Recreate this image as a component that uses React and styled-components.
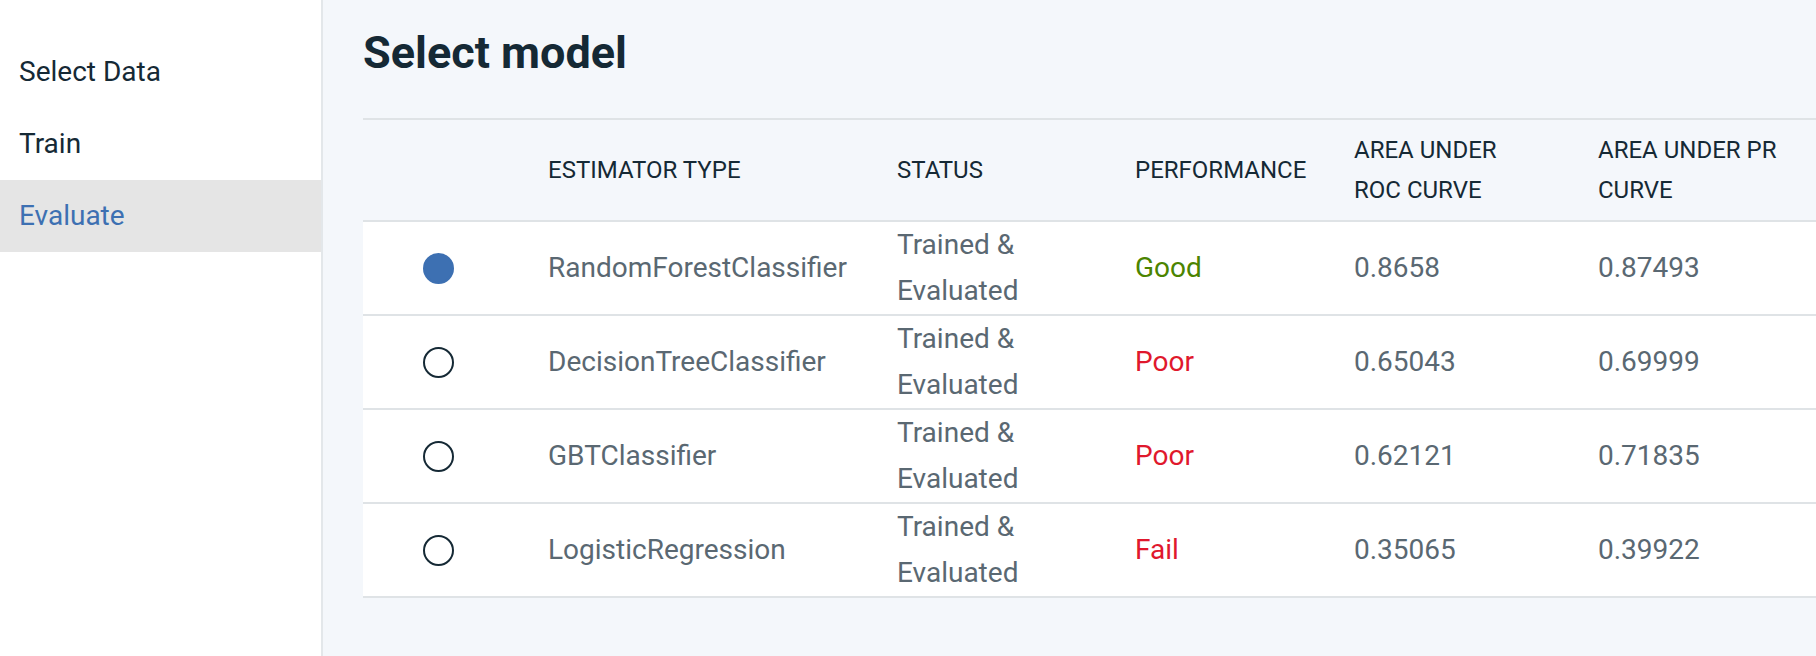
import React from "react";
import styled, { createGlobalStyle } from "styled-components";

const GlobalStyle = createGlobalStyle`
  html, body { margin: 0; padding: 0; }
  body {
    font-family: Roboto, "Liberation Sans", sans-serif;
    background: #f4f7fb;
    color: #152935;
  }
  * { box-sizing: border-box; }
`;

const Page = styled.div`
  display: grid;
  grid-template-columns: 323px 1fr;
  min-height: 656px;
`;

const Sidebar = styled.nav`
  background: #ffffff;
  border-right: 2px solid #e3e7ea;
  padding-top: 36px;
  display: flex;
  flex-direction: column;
`;

const NavItem = styled.div`
  height: 72px;
  line-height: 72px;
  padding-left: 19px;
  font-size: 28px;
  color: ${(p) => (p.$active ? "#3d70b2" : "#152935")};
  background: ${(p) => (p.$active ? "#e5e5e5" : "transparent")};
`;

const Main = styled.main`
  padding: 27px 0 0 40px;
  display: flex;
  flex-direction: column;
`;

const Title = styled.h1`
  margin: 0 0 39px 0;
  font-size: 45px;
  line-height: 52px;
  font-weight: 700;
  color: #152935;
`;

const Table = styled.div`
  display: grid;
  grid-template-columns: 185px 349px 238px 219px 244px 1fr;
  border-top: 2px solid #dfe3e6;
`;

const HeadCell = styled.div`
  display: flex;
  align-items: center;
  padding: 10px 0;
  min-height: 102px;
  font-size: 24px;
  line-height: 40px;
  color: #152935;
  border-bottom: 2px solid #dfe3e6;
`;

const Cell = styled.div`
  display: flex;
  align-items: center;
  background: #ffffff;
  height: 94px;
  font-size: 28px;
  line-height: 46px;
  color: ${(p) => p.$color || "#5a6872"};
  border-bottom: 2px solid #dfe3e6;
  padding-left: ${(p) => p.$pad || 0}px;
`;

const Radio = styled.span`
  display: inline-block;
  width: 31px;
  height: 31px;
  border-radius: 50%;
  border: 2px solid ${(p) => (p.$checked ? "#3d70b2" : "#152935")};
  background: ${(p) => (p.$checked ? "#3d70b2" : "#ffffff")};
`;

const perfColor = {
  Good: "#4b8400",
  Poor: "#e0182d",
  Fail: "#e0182d",
};

const rows = [
  { name: "RandomForestClassifier", perf: "Good", roc: "0.8658", pr: "0.87493", checked: true },
  { name: "DecisionTreeClassifier", perf: "Poor", roc: "0.65043", pr: "0.69999" },
  { name: "GBTClassifier", perf: "Poor", roc: "0.62121", pr: "0.71835" },
  { name: "LogisticRegression", perf: "Fail", roc: "0.35065", pr: "0.39922" },
];

export default function App() {
  return (
    <>
      <GlobalStyle />
      <Page>
        <Sidebar>
          <NavItem>Select Data</NavItem>
          <NavItem>Train</NavItem>
          <NavItem $active>Evaluate</NavItem>
        </Sidebar>
        <Main>
          <Title>Select model</Title>
          <Table>
            <HeadCell />
            <HeadCell>ESTIMATOR TYPE</HeadCell>
            <HeadCell>STATUS</HeadCell>
            <HeadCell>PERFORMANCE</HeadCell>
            <HeadCell>
              AREA UNDER
              <br />
              ROC CURVE
            </HeadCell>
            <HeadCell>
              AREA UNDER PR
              <br />
              CURVE
            </HeadCell>
            {rows.map((r) => (
              <React.Fragment key={r.name}>
                <Cell $pad={60}>
                  <Radio $checked={r.checked} />
                </Cell>
                <Cell>{r.name}</Cell>
                <Cell>
                  Trained &amp;
                  <br />
                  Evaluated
                </Cell>
                <Cell $color={perfColor[r.perf]}>{r.perf}</Cell>
                <Cell>{r.roc}</Cell>
                <Cell>{r.pr}</Cell>
              </React.Fragment>
            ))}
          </Table>
        </Main>
      </Page>
    </>
  );
}
